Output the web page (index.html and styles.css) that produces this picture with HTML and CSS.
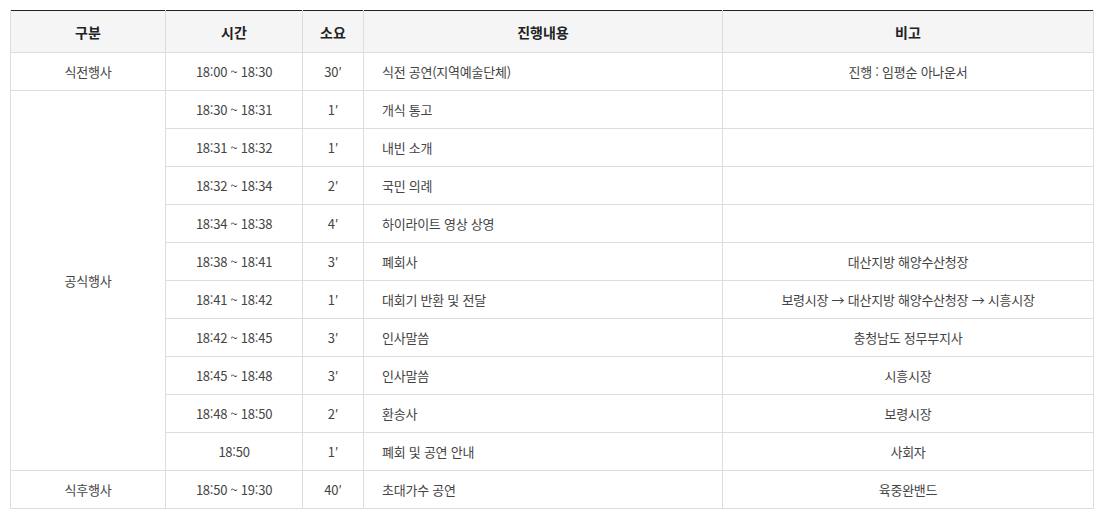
FILE: index.html
```html
<!DOCTYPE html>
<html lang="ko">
<head>
<meta charset="utf-8">
<link rel="stylesheet" href="styles.css">
</head>
<body>
<table class="sched">
  <colgroup>
    <col class="c1"><col class="c2"><col class="c3"><col class="c4"><col class="c5">
  </colgroup>
  <thead>
    <tr><th>구분</th><th>시간</th><th>소요</th><th>진행내용</th><th>비고</th></tr>
  </thead>
  <tbody>
    <tr><td>식전행사</td><td>18:00 ~ 18:30</td><td>30′</td><td class="left">식전 공연(지역예술단체)</td><td>진행 : 임평순 아나운서</td></tr>
    <tr><td rowspan="10">공식행사</td><td>18:30 ~ 18:31</td><td>1′</td><td class="left">개식 통고</td><td></td></tr>
    <tr><td>18:31 ~ 18:32</td><td>1′</td><td class="left">내빈 소개</td><td></td></tr>
    <tr><td>18:32 ~ 18:34</td><td>2′</td><td class="left">국민 의례</td><td></td></tr>
    <tr><td>18:34 ~ 18:38</td><td>4′</td><td class="left">하이라이트 영상 상영</td><td></td></tr>
    <tr><td>18:38 ~ 18:41</td><td>3′</td><td class="left">폐회사</td><td>대산지방 해양수산청장</td></tr>
    <tr><td>18:41 ~ 18:42</td><td>1′</td><td class="left">대회기 반환 및 전달</td><td>보령시장 → 대산지방 해양수산청장 → 시흥시장</td></tr>
    <tr><td>18:42 ~ 18:45</td><td>3′</td><td class="left">인사말씀</td><td>충청남도 정무부지사</td></tr>
    <tr><td>18:45 ~ 18:48</td><td>3′</td><td class="left">인사말씀</td><td>시흥시장</td></tr>
    <tr><td>18:48 ~ 18:50</td><td>2′</td><td class="left">환송사</td><td>보령시장</td></tr>
    <tr><td>18:50</td><td>1′</td><td class="left">폐회 및 공연 안내</td><td>사회자</td></tr>
    <tr><td>식후행사</td><td>18:50 ~ 19:30</td><td>40′</td><td class="left">초대가수 공연</td><td>육중완밴드</td></tr>
  </tbody>
</table>
</body>
</html>
```
FILE: styles.css
```css
html, body {
  margin: 0;
  padding: 0;
  background: #fff;
}
body {
  padding: 10px 0 0 10px;
  font-family: "Noto Sans CJK KR", "Noto Sans", sans-serif;
  color: #444;
}
.sched {
  border-collapse: collapse;
  table-layout: fixed;
  width: 1083px;
  border-top: 1px solid #222;
}
.c1 { width: 155px; }
.c2 { width: 137px; }
.c3 { width: 61px; }
.c4 { width: 359px; }
.c5 { width: 371px; }
.sched th, .sched td {
  border: 1px solid #ddd;
  text-align: center;
  vertical-align: middle;
  padding: 0;
}
.sched thead th {
  border-top: none;
  background: #f5f5f5;
  height: 41px;
  font-size: 14px;
  font-weight: 700;
  color: #222;
}
.sched td {
  height: 37px;
  font-size: 13px;
  line-height: 18px;
  letter-spacing: -0.25px;
}
.sched td.left {
  text-align: left;
  padding-left: 18px;
}
```
